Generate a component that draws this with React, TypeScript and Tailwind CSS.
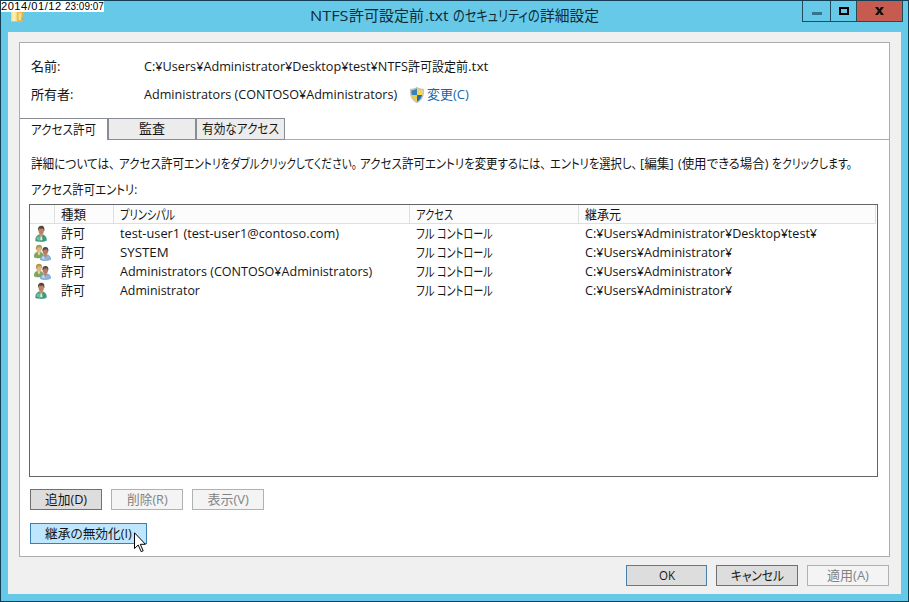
import { useLayoutEffect, useRef } from 'react'
import type { ReactNode } from 'react'
import clsx from 'clsx'

type FitProps = {
  width: number
  className?: string
  children: string
}

// Squeezes or stretches a run of text to the given advance width
function Fit({ width, className, children }: FitProps) {
  const ref = useRef<HTMLSpanElement>(null)

  useLayoutEffect(() => {
    const el = ref.current
    if (!el) return
    el.style.transform = `scaleX(${width / el.offsetWidth})`
  }, [width, children])

  return (
    <span className={clsx('inline-block whitespace-pre', className)} style={{ width }}>
      <span ref={ref} className="inline-block origin-left pb-[2px]">{children}</span>
    </span>
  )
}

function UserIcon() {
  return (
    <svg className="w-4 h-[17px]" viewBox="0 0 16 16" preserveAspectRatio="none">
      <path d="M1.5 14.8c0-3.6 1.7-5.6 4.6-5.8h1.8c3 .2 4.7 2.2 4.7 5.5-2.2 1.4-8.8 1.6-11.1.3z" fill="#3c9a78" stroke="#5ba98c" strokeWidth=".5" />
      <path d="M2.5 13.5c.3-2 1.5-3 3-3.3l.5 4.8z" fill="#75c0a2" />
      <path d="M5.8 8h2.8v2.3L7.2 12l-1.4-1.7z" fill="#c79675" />
      <path d="M6.400 10.500l.8 1 .9-1 .3 3.800H6.300z" fill="#e2f0e7" />
      <ellipse cx="7.2" cy="5.2" rx="2.7" ry="3.8" fill="#b98567" />
      <path d="M4 5.600C3.600 2.400 5 .8 7.300 .8s3.600 1.500 3 5c-.9-.6-.8-2-1.400-2.700-1.300.7-2.800.5-3.700.2-.4.8-.5 1.600-1.200 2.300z" fill="#594536" />
    </svg>
  )
}

function GroupIcon() {
  return (
    <svg className="w-[17px] h-[17px]" viewBox="0 0 16 16">
      <path d="M0 12.2c0-3 1.2-4.5 3.8-4.7h1.7c2 .2 3.3 1.5 3.6 4-.6 1.9-7 2.4-9.1.7z" fill="#7ca65d" stroke="#7c9c5e" strokeWidth=".4" />
      <path d="M3.6 7h2.2v2.5l-1.1 1.3-1.1-1.3z" fill="#edd3a7" />
      <ellipse cx="4.7" cy="4.4" rx="2.5" ry="3.4" fill="#dfb583" />
      <path d="M1.8 5.6C1.3 2.5 2.4.7 4.8.7c2.2 0 3.3 1.5 2.8 4.3-1-.5-.9-1.5-1.3-2.2-1 .5-2 .5-2.7.3-.3.9-.6 1.8-1.8 2.5z" fill="#b19a49" />
      <path d="M6 14.8c0-3 1.3-4.5 3.8-4.6h2c2.4.1 3.7 1.6 4 4.2-1.8 1.3-7.8 1.6-9.8.4z" fill="#8db4df" stroke="#668bb8" strokeWidth=".5" />
      <path d="M7.2 13.4c.4-1.4 1.2-2 2.4-2.2l.5 3.4z" fill="#c2d9ef" />
      <path d="M9.6 9.4h2.3v2.1l-1.1 1.1-1.2-1.1z" fill="#ba8767" />
      <ellipse cx="10.7" cy="6.7" rx="2.5" ry="3.4" fill="#b47e62" />
      <path d="M8 7c-.4-2.7.7-4.1 2.8-4.1 2 0 3.2 1.4 2.7 4.2-1-.5-.8-1.5-1.3-2.2-1.2.5-2.2.5-2.8.3-.3.6-.6 1.4-1.4 1.8z" fill="#594a46" />
    </svg>
  )
}

function ShieldIcon() {
  return (
    <svg className="w-4 h-4" viewBox="0 0 16 16">
      <path d="M8 .3c1.8 1.3 4 1.9 6.500 1.900.5 6.800-1.300 11-6.500 13.600C2.800 13.200 1 9 1.500 2.200 4 2.200 6.200 1.600 8 .3z" fill="#c5cbcb" stroke="#9ea5a5" strokeWidth=".5" />
      <path d="M8 1.500C6.400 2.700 4.500 3.200 2.400 3.300c-.1 1.700 0 3.300.4 4.700H8z" fill="#3981b8" />
      <path d="M8 1.500c1.600 1.200 3.500 1.700 5.600 1.800.1 1.700 0 3.300-.4 4.700H8z" fill="#f7d849" />
      <path d="M2.800 8c.9 3 2.600 5.200 5.200 6.700V8z" fill="#f0ce3c" />
      <path d="M13.200 8c-.9 3-2.600 5.200-5.200 6.700V8z" fill="#286ea8" />
    </svg>
  )
}

function FolderIcon() {
  return (
    <svg className="w-4 h-4" viewBox="0 0 16 16">
      <path d="M1 1.500h6l1 2v10H1z" fill="#f5dc83" />
      <path d="M2.500 3h3v10h-3z" fill="#fff0b3" />
      <path d="M7 3h6v10.500l-4 .5-2-1z" fill="#e9b94f" />
      <path d="M8.500 5h2.800v7H8.500z" fill="#f8df8c" />
      <path d="M11.500 9h1.700v3h-1.700z" fill="#85b8b6" />
    </svg>
  )
}

type ButtonProps = {
  className?: string
  variant?: 'normal' | 'default' | 'hot' | 'disabled'
  children: ReactNode
}

function Button({ className, variant = 'normal', children }: ButtonProps) {
  return (
    <button
      disabled={variant === 'disabled'}
      className={clsx(
        'flex items-center justify-center h-[21px] border',
        variant === 'normal' && 'bg-[#dddddd] border-[#707070]',
        variant === 'default' && 'bg-[#dddddd] border-[#4a7fa8]',
        variant === 'hot' && 'bg-[#bee6fd] border-[#3c7fb1]',
        variant === 'disabled' && 'bg-[#f4f4f4] border-[#adb2b5] text-[#838383]',
        className
      )}
    >
      {children}
    </button>
  )
}

const entries = [
  { group: false, principal: 'test-user1 (test-user1@contoso.com)', width: 219, from: 'C:¥Users¥Administrator¥Desktop¥test¥', fromWidth: 232 },
  { group: true, principal: 'SYSTEM', width: 49, from: 'C:¥Users¥Administrator¥', fromWidth: 147 },
  { group: true, principal: 'Administrators (CONTOSO¥Administrators)', width: 252, from: 'C:¥Users¥Administrator¥', fromWidth: 147 },
  { group: false, principal: 'Administrator', width: 80, from: 'C:¥Users¥Administrator¥', fromWidth: 147 },
]

const columns = 'grid grid-cols-[25px_59px_296px_169px_1fr]'
const headerCell = 'h-[18px] pl-[6px] border-r border-[#dedfe1] flex items-start'

function TitleBar() {
  return (
    <div className="relative h-[30px]">
      <div className="absolute left-[9px] top-[7px]"><FolderIcon /></div>
      <div className="pl-[309px] h-[30px] flex items-center text-[15px] text-[#102b36]">
        <Fit width={39}>NTFS</Fit>
        <Fit width={75}>許可設定前</Fit>
        <Fit width={24} className="ml-px mr-[4px]">.txt</Fit>
        <Fit width={87}>のセキュリティの</Fit>
        <Fit width={59}>詳細設定</Fit>
      </div>
      <div className="absolute right-[5px] -top-px flex h-[22px] w-[101px] border border-[#234b5a]">
        <div className="w-[28px] border-r border-[#234b5a] flex justify-center pt-[11px]">
          <div className="w-[10px] h-[3px] bg-[#347690]" />
        </div>
        <div className="w-[26px] border-r border-[#234b5a] flex justify-center pt-[6px]">
          <div className="w-[10px] h-2 border-2 border-black" />
        </div>
        <div className="flex-1 bg-[#c75b50] flex justify-center pt-[6px]">
          <svg className="w-[9px] h-2" viewBox="0 0 9 8">
            <path d="M0 0h3l1.500 2.300L6 0h3L6 4l3 4H6L4.500 5.700 3 8H0l3-4z" fill="#101010" />
          </svg>
        </div>
      </div>
      <div className="absolute -left-px -top-px w-[104px] h-[12px] flex bg-white text-black text-[11.5px] leading-[12px] font-['Liberation_Sans']">
        <Fit width={61} className="ml-px tracking-[0.5px]">2014/01/12</Fit>
        <Fit width={39} className="ml-[3px]">23:09:07</Fit>
      </div>
    </div>
  )
}

function EntryList() {
  return (
    <div className="ml-[9px] mt-[2px] w-[849px] h-[273px] border border-[#646567] bg-white">
      <div className={clsx(columns, 'h-[19px] mr-px bg-[#fcfcfc] border-b border-r border-[#dedfe1]')}>
        <div className="h-[18px] border-r border-[#dedfe1]" />
        <div className={headerCell}><Fit width={25}>種類</Fit></div>
        <div className={headerCell}><Fit width={55}>プリンシパル</Fit></div>
        <div className={headerCell}><Fit width={37}>アクセス</Fit></div>
        <div className="h-[18px] pl-[6px] flex items-start"><Fit width={36}>継承元</Fit></div>
      </div>
      {entries.map((entry, i) => (
        <div key={i} className={clsx(columns, 'h-[19px] items-center')}>
          <div className="pl-[4px] pb-[2px] flex">{entry.group ? <GroupIcon /> : <UserIcon />}</div>
          <div className="pl-[6px] flex"><Fit width={24}>許可</Fit></div>
          <div className="pl-[6px] flex"><Fit width={entry.width}>{entry.principal}</Fit></div>
          <div className="pl-[6px] flex">
            <Fit width={21}>フル </Fit>
            <Fit width={56}>コントロール</Fit>
          </div>
          <div className="pl-[6px] flex"><Fit width={entry.fromWidth}>{entry.from}</Fit></div>
        </div>
      ))}
    </div>
  )
}

export default function App() {
  return (
    <div className="relative w-[909px] h-[602px] overflow-hidden bg-[#66c9e8] border border-[#123f55] font-['Open_Sans','Noto_Sans_CJK_JP',sans-serif] text-[13px] leading-[18px] text-[#151515] [font-feature-settings:'palt'] cursor-default">
      <TitleBar />
      <div className="mx-[7px] h-[563px] bg-[#f0f0f0] border-t border-[#8dbccc] px-[11px] pt-[10px]">
        <div className="h-[515px] w-[871px] bg-white border border-[#adadad] pt-[10px]">
          <div className="flex items-center h-7 pl-[11px]">
            <div className="w-[113px] flex"><Fit width={29}>名前:</Fit></div>
            <Fit width={264}>C:¥Users¥Administrator¥Desktop¥test¥NTFS</Fit>
            <Fit width={60}>許可設定前</Fit>
            <Fit width={21}>.txt</Fit>
          </div>
          <div className="flex items-center h-7 pl-[11px]">
            <div className="w-[113px] flex"><Fit width={42}>所有者:</Fit></div>
            <Fit width={253}>Administrators (CONTOSO¥Administrators)</Fit>
            <div className="ml-[12px] mr-[2px]"><ShieldIcon /></div>
            <Fit width={42} className="text-[#1668a8]">変更(C)</Fit>
          </div>

          <div className="mt-[9px] h-[22px] flex">
            <div className="w-[87px] border-t border-[#898c95] flex items-center justify-center">
              <Fit width={65}>アクセス許可</Fit>
            </div>
            <div className="w-[89px] border border-l-2 border-[#898c95] bg-[#ececec] flex items-center justify-center">
              <Fit width={26}>監査</Fit>
            </div>
            <div className="w-[89px] border border-[#898c95] bg-[#ececec] flex items-center justify-center">
              <Fit width={77}>有効なアクセス</Fit>
            </div>
            <div className="flex-1 border-b border-[#adadad]" />
          </div>

          <div className="mt-[11px] h-[26px] pl-[11px] flex items-center">
            <Fit width={84} className="mr-[4px]">詳細については、</Fit>
            <Fit width={65}>アクセス許可</Fit>
            <Fit width={173} className="mr-[3px]">エントリをダブルクリックしてください。</Fit>
            <Fit width={65}>アクセス許可</Fit>
            <Fit width={121} className="mr-[4px]">エントリを変更するには、</Fit>
            <Fit width={87} className="mr-[3px]">エントリを選択し、</Fit>
            <Fit width={34} className="mr-[4px]">[編集]</Fit>
            <Fit width={90} className="mr-[4px]">(使用できる場合)</Fit>
            <Fit width={80}>をクリックします。</Fit>
          </div>
          <div className="h-[25px] pl-[11px] flex items-center">
            <Fit width={106}>アクセス許可エントリ:</Fit>
          </div>

          <EntryList />

          <div className="mt-3 ml-[10px] flex gap-[9px]">
            <Button className="w-[72px]"><Fit width={42}>追加(D)</Fit></Button>
            <Button className="w-[72px]" variant="disabled"><Fit width={41}>削除(R)</Fit></Button>
            <Button className="w-[72px]" variant="disabled"><Fit width={41}>表示(V)</Fit></Button>
          </div>
          <div className="mt-[13px] ml-[10px]">
            <Button className="w-[117px]" variant="hot"><Fit width={87}>継承の無効化(I)</Fit></Button>
          </div>
        </div>

        <div className="mt-2 pr-px flex justify-end gap-[9px]">
          <Button className="w-[81px]" variant="default"><Fit width={16}>OK</Fit></Button>
          <Button className="w-[82px]"><Fit width={53}>キャンセル</Fit></Button>
          <Button className="w-[82px]" variant="disabled"><Fit width={42}>適用(A)</Fit></Button>
        </div>
      </div>

      {/* mouse pointer */}
      <svg className="absolute left-[133px] top-[531px] w-3 h-[21px]" viewBox="0 0 12 21">
        <path d="M.5.8v15.700l3.700-3.500 3 6.700 2-.9-2.900-6.500h5.200z" fill="#fff" stroke="#000" />
      </svg>
    </div>
  )
}
